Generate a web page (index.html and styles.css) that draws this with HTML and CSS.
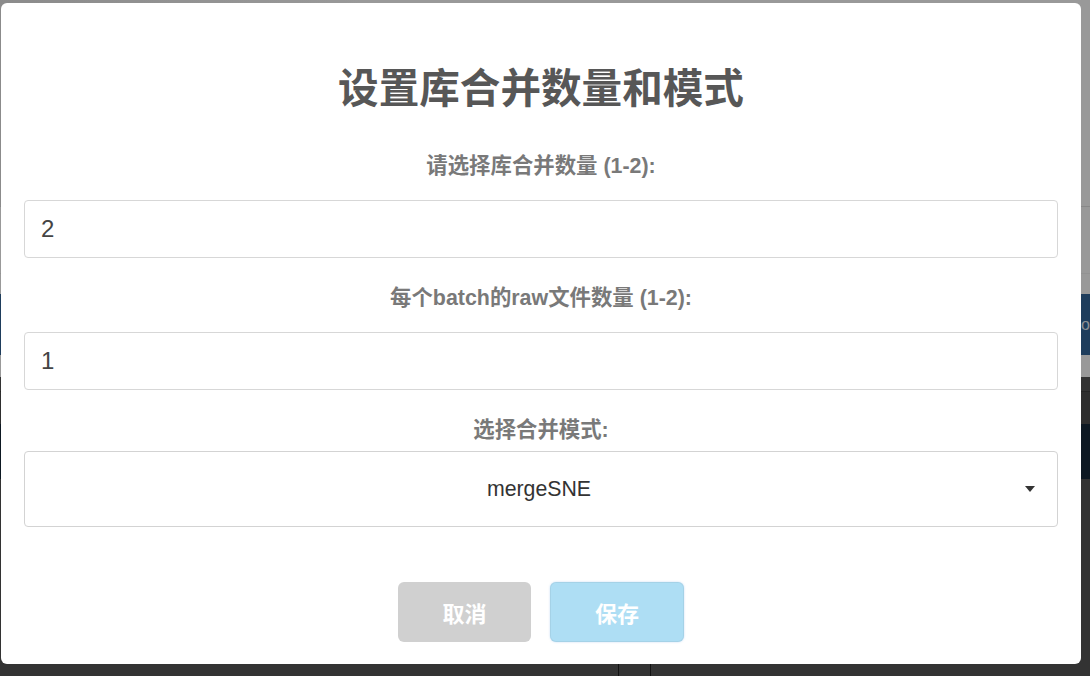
FILE: index.html
```
<!DOCTYPE html>
<html lang="zh-CN">
<head>
<meta charset="utf-8">
<title>设置库合并数量和模式</title>
<link rel="stylesheet" href="styles.css">
</head>
<body>
<div class="page">
  <header class="page-head"></header>
  <div class="page-sub"></div>
  <div class="page-gap"></div>
  <div class="page-band"><span class="band-text">Pos</span></div>
  <div class="page-gap2"></div>
  <div class="page-dark">
    <div class="dark-strip"></div>
    <div class="dark-mid"></div>
    <div class="dark-navy"></div>
    <div class="dark-body"></div>
    <div class="dark-row">
      <div class="cell cell-a"></div>
      <div class="cell cell-b"></div>
      <div class="cell cell-c"></div>
    </div>
  </div>
</div>

<div class="overlay"></div>

<div class="modal" role="dialog">
  <h2 class="modal-title">设置库合并数量和模式</h2>
  <label class="field-label label-first">请选择库合并数量 (1-2):</label>
  <div class="field-input">2</div>
  <label class="field-label">每个batch的raw文件数量 (1-2):</label>
  <div class="field-input">1</div>
  <label class="field-label">选择合并模式:</label>
  <div class="field-select">
    <span class="select-value">mergeSNE</span>
    <span class="select-caret"></span>
  </div>
  <div class="actions">
    <button class="btn btn-cancel">取消</button>
    <button class="btn btn-confirm">保存</button>
  </div>
</div>
</body>
</html>
```

FILE: styles.css
```
html, body {
  margin: 0;
  padding: 0;
}

body {
  width: 1090px;
  height: 676px;
  overflow: hidden;
  font-family: "Liberation Sans", "Noto Sans CJK SC", sans-serif;
  background: #ffffff;
}

/* ---------- background page ---------- */
.page {
  width: 1090px;
  height: 676px;
  display: flex;
  flex-direction: column;
}

.page-head {
  height: 206px;
  background: linear-gradient(90deg, #e8e8e8 0, #ffffff 360px);
  border-bottom: 1px solid #e3e3e3;
}

.page-sub {
  height: 66px;
  background: #ffffff;
  border-bottom: 1px solid #f4f4f4;
}

.page-gap {
  height: 20px;
  background: #ffffff;
}

.page-band {
  height: 61px;
  background: #336699;
  display: flex;
  align-items: center;
  justify-content: flex-end;
  overflow: hidden;
}

.band-text {
  color: #e8eef5;
  font-size: 16px;
  margin-right: -8px;
}

.page-gap2 {
  height: 22px;
  background: #ffffff;
}

.page-dark {
  flex: 1;
  display: flex;
  flex-direction: column;
  background: #555555;
}

.dark-strip {
  height: 14px;
  background: #555555;
  border-bottom: 1px solid #3f3f3f;
}

.dark-mid {
  height: 32px;
  background: #4d4d4d;
}

.dark-navy {
  height: 55px;
  background: #162839;
}

.dark-body {
  flex: 1;
  background: #555555;
}

.dark-row {
  height: 26px;
  display: flex;
  background: #555555;
}

.cell-a {
  width: 618px;
}

.cell-b {
  width: 31px;
  border-left: 1px solid #1e1e1e;
}

.cell-c {
  flex: 1;
  border-left: 1px solid #1e1e1e;
}

/* ---------- overlay & modal ---------- */
.overlay {
  position: fixed;
  inset: 0;
  background: rgba(0, 0, 0, 0.4);
}

.modal {
  position: fixed;
  left: 1px;
  top: 3px;
  width: 1080px;
  height: 661px;
  box-sizing: border-box;
  padding: 0 23px;
  background: #ffffff;
  border-radius: 6px;
  display: flex;
  flex-direction: column;
}

.modal-title {
  margin: 59px 0 0;
  height: 49px;
  line-height: 48px;
  text-align: center;
  font-size: 40.6px;
  font-weight: 700;
  color: #575757;
  font-family: "Noto Sans CJK SC", "Liberation Sans", sans-serif;
}

.field-label {
  display: block;
  margin-top: 28px;
  height: 24px;
  line-height: 24px;
  text-align: center;
  font-size: 21.4px;
  font-weight: 700;
  color: #797979;
}

.label-first {
  margin-top: 43px;
}

.field-input {
  margin-top: 22px;
  height: 58px;
  box-sizing: border-box;
  border: 1px solid #d7d7d7;
  border-radius: 4px;
  padding: 0 16px;
  display: flex;
  align-items: center;
  font-size: 24px;
  color: #444444;
}

.field-select {
  margin-top: 9px;
  height: 76px;
  box-sizing: border-box;
  border: 1px solid #d3d3d3;
  border-radius: 4px;
  padding: 0 22px 0 28px;
  display: flex;
  align-items: center;
}

.select-value {
  flex: 1;
  text-align: center;
  font-size: 21.3px;
  color: #333333;
}

.select-caret {
  width: 0;
  height: 0;
  border-left: 5.5px solid transparent;
  border-right: 5.5px solid transparent;
  border-top: 6px solid #333333;
}

.actions {
  margin-top: 55px;
  display: flex;
  justify-content: center;
  gap: 19px;
}

.btn {
  width: 133px;
  height: 60px;
  border: none;
  border-radius: 6px;
  color: #ffffff;
  font-size: 22px;
  font-weight: 700;
  font-family: "Noto Sans CJK SC", "Liberation Sans", sans-serif;
  padding: 0;
}

.btn-cancel {
  background: #d0d0d0;
}

.btn-confirm {
  width: 134px;
  background: #aedef4;
  box-shadow: 0 0 2px rgba(128, 179, 235, 0.5), inset 0 0 0 1px rgba(0, 0, 0, 0.05);
}
```
